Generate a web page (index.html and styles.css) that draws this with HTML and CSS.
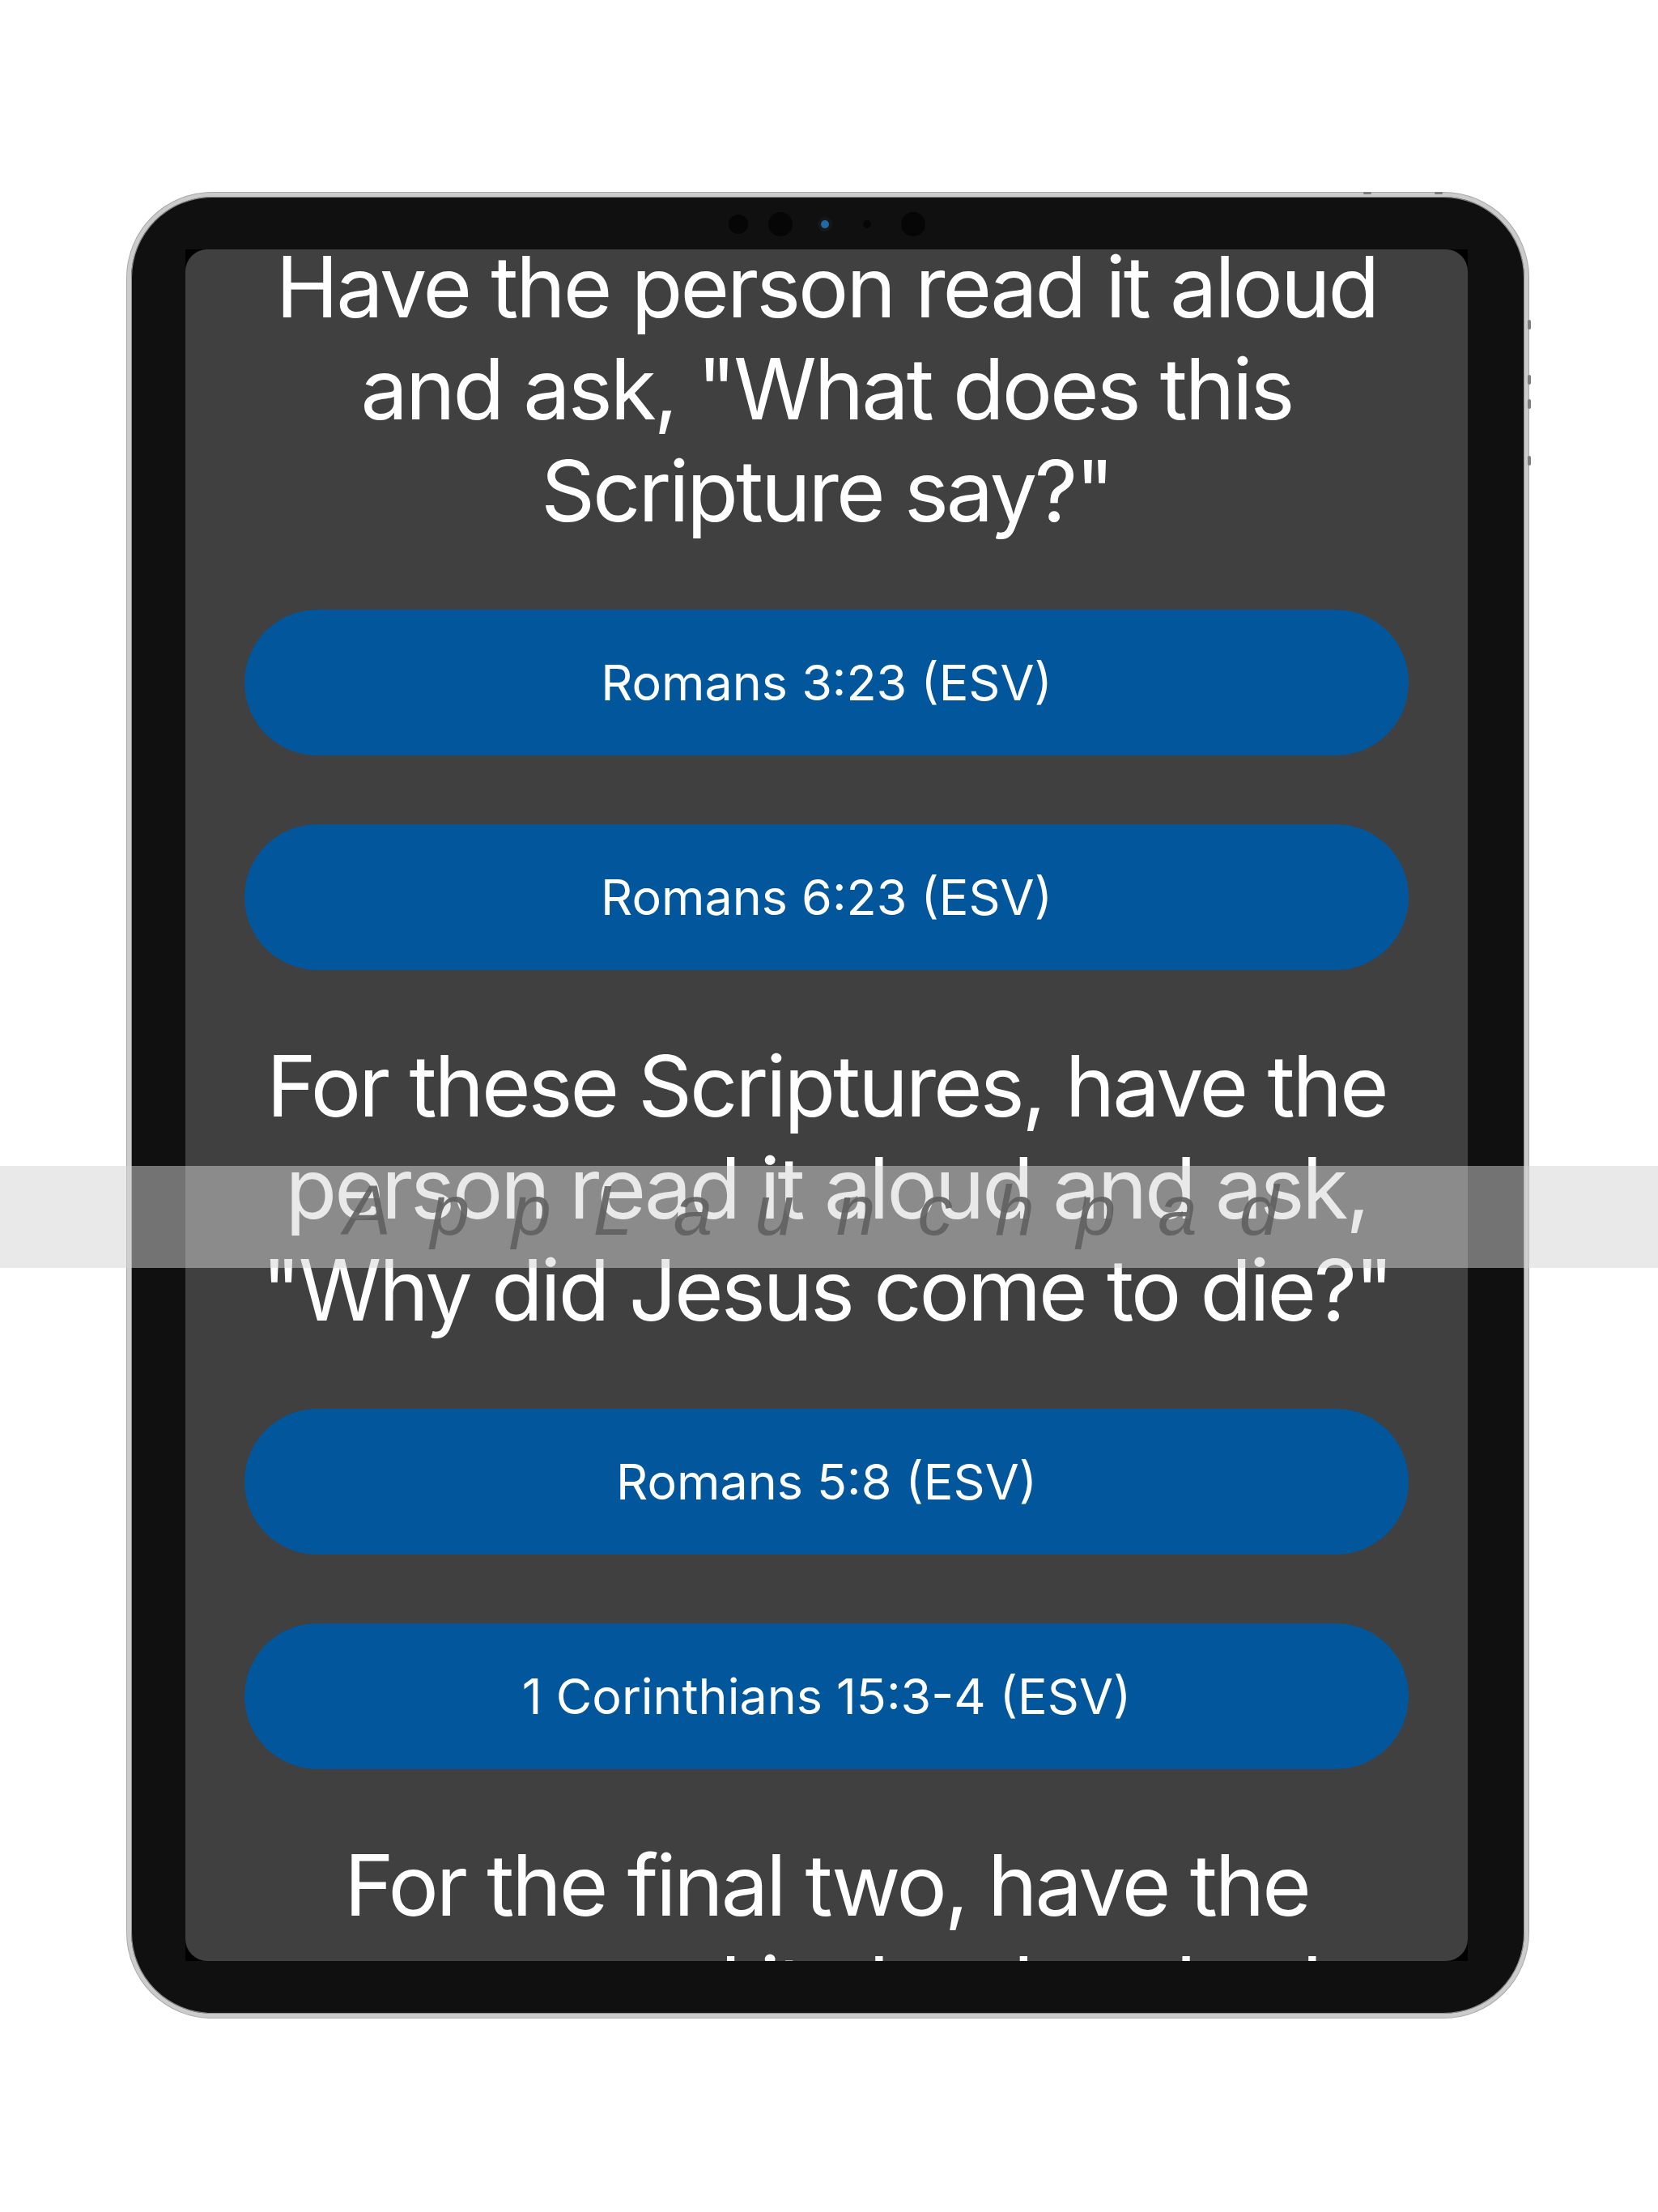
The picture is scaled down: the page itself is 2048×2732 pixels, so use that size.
FILE: index.html
```html
<!DOCTYPE html>
<html lang="en">
<head>
<meta charset="utf-8">
<title>AppLaunchpad</title>
<link rel="stylesheet" href="styles.css">
</head>
<body>
<div class="stage">
  <div class="device">
    <span class="bump bump-top1"></span>
    <span class="bump bump-top2"></span>
    <span class="bump bump-side bump-s1"></span>
    <span class="bump bump-side bump-s2"></span>
    <span class="bump bump-side bump-s3"></span>
    <span class="bump bump-side bump-s4"></span>
    <div class="camera-row">
      <span class="lens lens-a"></span>
      <span class="lens lens-b"></span>
      <span class="lens lens-c"></span>
      <span class="lens lens-d"></span>
      <span class="lens lens-e"></span>
    </div>
    <div class="screen">
      <div class="content">
        <h2 class="prompt prompt-first">Have the person read it aloud<br>and ask, "What does this<br>Scripture say?"</h2>
        <button class="verse verse-after-prompt">Romans 3:23 (ESV)</button>
        <button class="verse">Romans 6:23 (ESV)</button>
        <h2 class="prompt">For these Scriptures, have the<br>person read it aloud and ask,<br>"Why did Jesus come to die?"</h2>
        <button class="verse verse-after-prompt">Romans 5:8 (ESV)</button>
        <button class="verse">1 Corinthians 15:3-4 (ESV)</button>
        <h2 class="prompt">For the final two, have the<br>person read it aloud and ask,<br>"What does this Scripture say?"</h2>
      </div>
    </div>
  </div>
</div>
<div class="watermark"><span class="watermark-text">A p p L a u n c h p a d</span></div>
</body>
</html>
```
FILE: styles.css
```css
html, body {
  margin: 0;
  padding: 0;
  background: #ffffff;
}

body {
  width: 2048px;
  height: 2732px;
  overflow: hidden;
  position: relative;
  font-family: "Inter", "Noto Sans", sans-serif;
}

.stage {
  padding-top: 238px;
  padding-left: 157px;
}

.device {
  position: relative;
  box-sizing: border-box;
  width: 1731px;
  height: 2254px;
  border-radius: 105px;
  background: #101010;
  border: 5px solid #cbcbcb;
  box-shadow: 0 0 0 1px #a9a9a9, inset 0 0 0 1px #8c8c8c;
  padding: 0 70px 65px 67px;
  display: flex;
  flex-direction: column;
}

.camera-row {
  height: 65px;
  flex: none;
  display: flex;
  align-items: center;
  justify-content: center;
  padding-top: 3px;
  box-sizing: border-box;
}

.lens {
  display: block;
  border-radius: 50%;
  background: #060606;
  flex: none;
}

.lens-a { width: 24px; height: 24px; }
.lens-b { width: 30px; height: 30px; margin-left: 25px; }
.lens-c {
  width: 10px; height: 10px; margin-left: 35px;
  background: #1f6aa3;
  box-shadow: 0 0 0 4px #181818;
}
.lens-d { width: 10px; height: 10px; margin-left: 42px; }
.lens-e { width: 30px; height: 30px; margin-left: 37px; }

.bump {
  position: absolute;
  background: #7d7d7d;
  border-radius: 2px;
}

.bump-top1 { top: -6px; left: 1522px; width: 10px; height: 3px; }
.bump-top2 { top: -6px; left: 1610px; width: 10px; height: 3px; }

.bump-side { right: -8px; width: 4px; height: 12px; }
.bump-s1 { top: 152px; }
.bump-s2 { top: 220px; }
.bump-s3 { top: 250px; }
.bump-s4 { top: 320px; }

.screen {
  flex: 1;
  background: #000000;
  overflow: hidden;
}

.content {
  height: 100%;
  background: #404040;
  border-radius: 27px;
  overflow: hidden;
  box-sizing: border-box;
  padding: 0 73px;
  display: flex;
  flex-direction: column;
  align-items: stretch;
}

.prompt {
  margin: 80px -40px 0;
  padding: 0;
  color: #ffffff;
  font-family: "Inter", "Noto Sans", sans-serif;
  font-weight: 400;
  font-size: 104px;
  line-height: 126px;
  text-align: center;
  letter-spacing: -3px;
  flex: none;
}

.prompt-first {
  margin-top: -17px;
}

.verse {
  flex: none;
  display: block;
  margin: 85px 0 0;
  height: 180px;
  border: none;
  border-radius: 90px;
  background: #02579c;
  color: #ffffff;
  font-family: "Inter", "Noto Sans", sans-serif;
  font-weight: 400;
  font-size: 61px;
  letter-spacing: 0;
  text-align: center;
  padding: 0;
}

.verse-after-prompt {
  margin-top: 84px;
}

.watermark {
  position: absolute;
  left: 0;
  top: 1440px;
  width: 2048px;
  height: 126px;
  background: rgba(212, 212, 212, 0.51);
  box-sizing: border-box;
  padding: 0 0 16px;
  text-align: center;
}

.watermark-text {
  display: inline-block;
  font-family: "Liberation Sans", Arial, sans-serif;
  font-style: italic;
  font-size: 87px;
  line-height: 110px;
  letter-spacing: 14px;
  color: rgba(95, 95, 95, 0.9);
  margin-left: -30px;
}
```
